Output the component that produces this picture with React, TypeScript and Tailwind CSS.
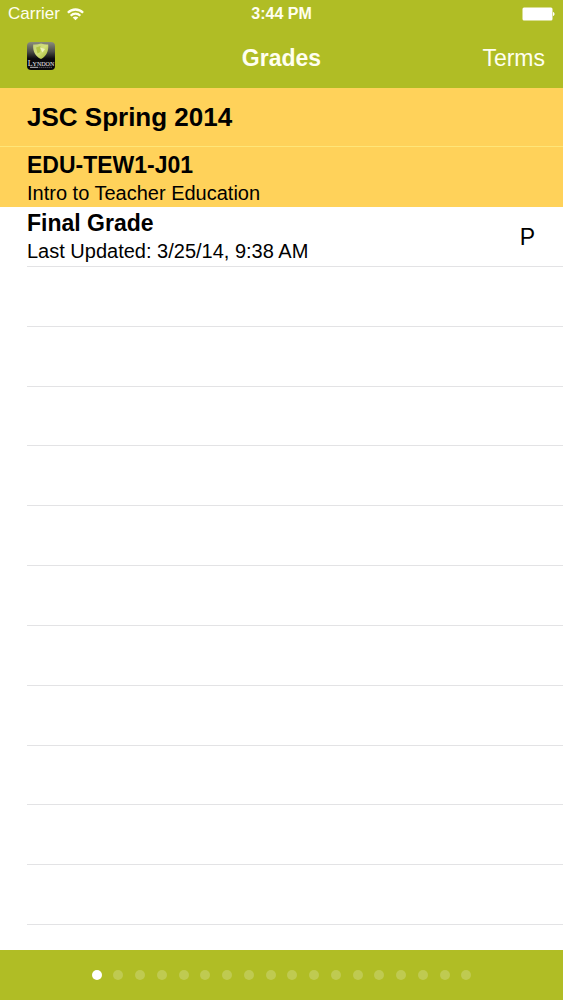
import React from 'react';

const PAGE_COUNT = 18;
const EMPTY_ROWS = 11;

const WifiIcon: React.FC = () => (
  <svg viewBox="0 0 17 13" className="w-[17px] h-[13px]" fill="none" stroke="#fffff0" strokeWidth="2.3" aria-hidden="true">
    <path d="M.9 4.8C5.2 .4 11.8 .4 16.1 4.8" />
    <path d="M3.7 7.7C6.4 4.9 10.6 4.9 13.3 7.7" />
    <path d="M8.5 12.2L5.7 9.5C7.3 8 9.7 8 11.3 9.5Z" fill="#fffff0" stroke="none" />
  </svg>
);

const BatteryIcon: React.FC = () => (
  <svg viewBox="0 0 34 14" className="w-[34px] h-3.5" fill="#ffffff" aria-hidden="true">
    <rect x="1.5" y="0.5" width="30" height="13" rx="1.5" />
    <path d="M32 5C34 5.4 34 8.6 32 9Z" />
  </svg>
);

const SchoolLogo: React.FC = () => (
  <svg viewBox="0 0 28 28" className="w-7 h-7" aria-hidden="true">
    <defs>
      <linearGradient id="tile" x1="0" y1="0" x2="0" y2="1">
        <stop offset="0" stopColor="#8b8d7c" />
        <stop offset="0.35" stopColor="#4a4b45" />
        <stop offset="0.6" stopColor="#0b0a0e" />
        <stop offset="1" stopColor="#08070b" />
      </linearGradient>
      <linearGradient id="shield" x1="0" y1="0" x2="1" y2="1">
        <stop offset="0" stopColor="#c3d07a" />
        <stop offset="0.5" stopColor="#d3e07a" />
        <stop offset="1" stopColor="#9db02c" />
      </linearGradient>
    </defs>
    <rect width="28" height="28" rx="4" fill="url(#tile)" />
    <path d="M6.2 2.4Q10 2.8 14 1.4Q18 2.8 21.2 2.4C21.8 9 19.4 14 14 17C8.2 14 5.6 9 6.2 2.4Z" fill="url(#shield)" />
    <path d="M9 5.5L13.5 4V10L10.5 11.5Z" fill="#b2c445" />
    <path d="M13 5.5L18 7L15.5 10.5Z" fill="#eef3bd" />
    <text x="14" y="23.6" textAnchor="middle" fill="#f4f2f4" fontFamily="Liberation Serif, serif">
      <tspan fontSize="8">L</tspan>
      <tspan fontSize="6">YNDON</tspan>
    </text>
    <path d="M3 25.3H11" stroke="#d6d4d8" strokeWidth="0.9" />
    <path d="M11.5 25.3H25" stroke="#77747d" strokeWidth="0.8" strokeDasharray="1.5 0.5" />
  </svg>
);

const App: React.FC = () => {
  return (
    <div className="flex min-h-screen flex-col bg-white text-black font-['Liberation_Sans',Arial,sans-serif]">
      <header className="bg-[#b0bd25] text-[#fffff0]">
        <div className="grid h-7 grid-cols-3 items-center px-2 text-[17px] leading-5">
          <div className="flex items-center gap-[7px]">
            <span>Carrier</span>
            <WifiIcon />
          </div>
          <span className="text-center text-base font-bold">3:44 PM</span>
          <div className="flex justify-end">
            <BatteryIcon />
          </div>
        </div>
        <nav className="grid h-[60px] grid-cols-3 items-center px-[18px] text-[23px] leading-7">
          <button type="button" aria-label="Home" className="ml-[9px] w-7 pb-1">
            <SchoolLogo />
          </button>
          <h1 className="text-center font-bold">Grades</h1>
          <button type="button" className="text-right">Terms</button>
        </nav>
      </header>

      <main className="flex flex-1 flex-col">
        <h2 className="flex h-[59px] items-center border-b border-[#ffe678] bg-[#ffd25a] px-[27px] text-[26px] leading-8 font-bold">
          JSC Spring 2014
        </h2>
        <div className="h-[60px] bg-[#ffd25a] px-[27px] pt-1">
          <h3 className="text-[23px] leading-7 font-bold">EDU-TEW1-J01</h3>
          <p className="text-xl leading-7">Intro to Teacher Education</p>
        </div>
        <div className="ml-[27px] flex h-[60px] items-center justify-between border-b border-[#e3e3e5] pr-7">
          <div>
            <h3 className="text-[23px] leading-7 font-bold">Final Grade</h3>
            <p className="text-xl leading-7">Last Updated: 3/25/14, 9:38 AM</p>
          </div>
          <span className="text-[23px] leading-7">P</span>
        </div>
        <div className="ml-[27px] flex flex-1 flex-col pb-[25px]">
          {Array.from({ length: EMPTY_ROWS }, (_, i) => (
            <div key={i} className="flex-1 border-b border-[#e3e3e5]" />
          ))}
        </div>
      </main>

      <footer className="flex h-[50px] items-center justify-center bg-[#b0bd25]">
        <div className="flex w-[380px] justify-between">
          {Array.from({ length: PAGE_COUNT }, (_, i) => (
            <button
              key={i}
              type="button"
              aria-label={`Page ${i + 1}`}
              className={i === 0 ? 'size-2.5 rounded-full bg-white' : 'size-2.5 rounded-full bg-[#bfca51]'}
            />
          ))}
        </div>
      </footer>
    </div>
  );
};

export default App;
